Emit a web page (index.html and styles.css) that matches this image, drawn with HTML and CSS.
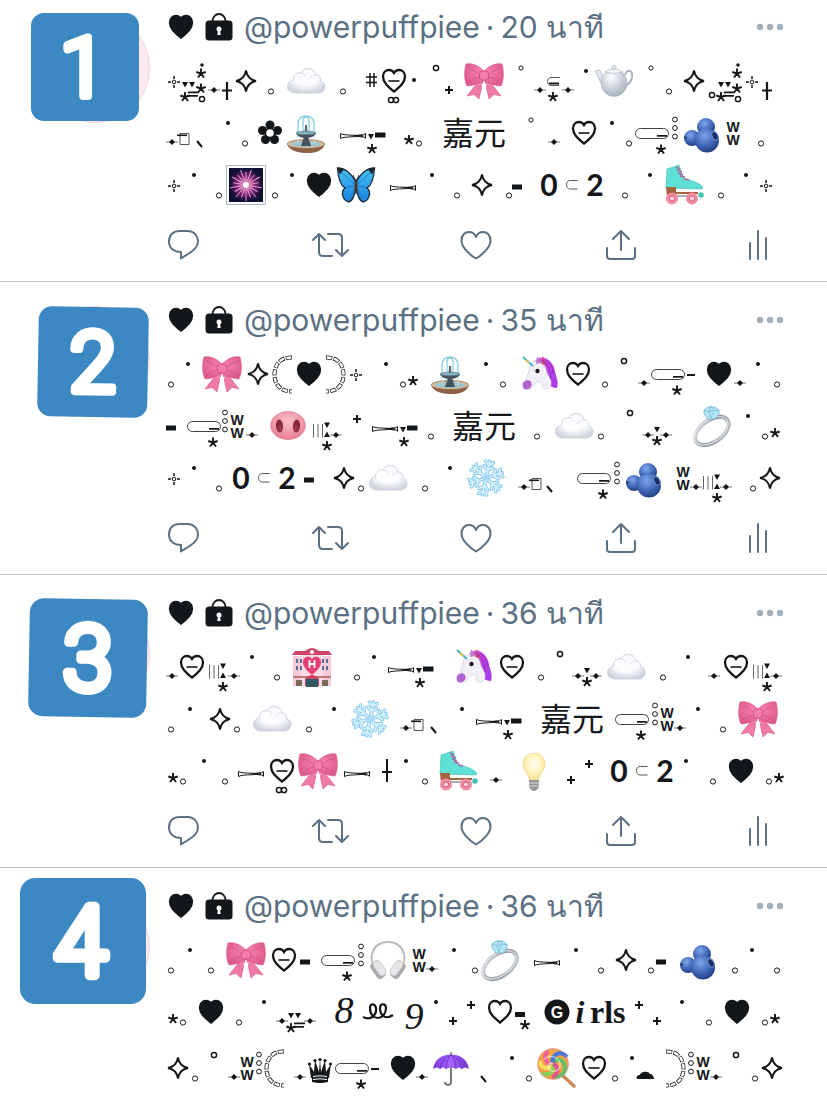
FILE: index.html
```html
<!DOCTYPE html>
<html lang="th">
<head>
  <meta charset="UTF-8">
  <meta name="viewport" content="width=device-width, initial-scale=1.0">
  <title>@powerpuffpiee</title>
  <link rel="stylesheet" href="styles.css">
</head>
<body>
  <!-- shared gradients -->
  <svg class="defs" aria-hidden="true">
    <defs>
      <radialGradient id="gCloud" cx=".5" cy=".4" r=".6"><stop offset=".5" stop-color="#fcfcfe"/><stop offset="1" stop-color="#cfd4de"/></radialGradient>
      <radialGradient id="gBow" cx=".5" cy=".4" r=".6"><stop offset="0" stop-color="#f887b0"/><stop offset="1" stop-color="#de5a8c"/></radialGradient>
      <radialGradient id="gPot" cx=".4" cy=".3" r=".7"><stop offset="0" stop-color="#fbfcfd"/><stop offset="1" stop-color="#a9b2bf"/></radialGradient>
      <radialGradient id="gBerry" cx=".4" cy=".3" r=".7"><stop offset="0" stop-color="#7fa5ea"/><stop offset=".6" stop-color="#3f68b8"/><stop offset="1" stop-color="#243f85"/></radialGradient>
      <radialGradient id="gPig" cx=".5" cy=".35" r=".65"><stop offset="0" stop-color="#fbc0cc"/><stop offset="1" stop-color="#e67f96"/></radialGradient>
      <radialGradient id="gBurst"><stop offset="0" stop-color="#fff"/><stop offset=".2" stop-color="#ff9bd6"/><stop offset=".6" stop-color="#8c2a78"/><stop offset="1" stop-color="#101035"/></radialGradient>
      <radialGradient id="gBulb" cx=".5" cy=".4" r=".6"><stop offset="0" stop-color="#fffdf2"/><stop offset=".6" stop-color="#fff2b8"/><stop offset="1" stop-color="#efd887"/></radialGradient>
      <linearGradient id="gWing" x1="0" y1="0" x2="0" y2="1"><stop offset="0" stop-color="#45c3fa"/><stop offset="1" stop-color="#1c82dc"/></linearGradient>
      <linearGradient id="gSilver" x1="0" y1="0" x2="1" y2="1"><stop offset="0" stop-color="#e4e6ea"/><stop offset=".5" stop-color="#8f959f"/><stop offset="1" stop-color="#c6cad0"/></linearGradient>
      <linearGradient id="gUmb" x1="0" y1="0" x2="1" y2="0"><stop offset="0" stop-color="#7a35d8"/><stop offset=".5" stop-color="#a765ff"/><stop offset="1" stop-color="#6f2bc8"/></linearGradient>
      <linearGradient id="gMane" x1="0" y1="0" x2="1" y2="1"><stop offset="0" stop-color="#e04be0"/><stop offset="1" stop-color="#a23bea"/></linearGradient>
    </defs>
  </svg>

  <main>
    <article class="tweet">
      <div class="avatar">
        <svg class="badge badge1" viewBox="0 0 108 108"><rect width="108" height="108" rx="13"/><text x="52" y="83">1</text></svg>
      </div>
      <div class="body">
        <header>
          <span class="name" data-glyphs="2 heart 10 bag 10"></span>
          <a class="handle" href="#">@powerpuffpiee</a><span class="time">·</span><span class="time">20 นาที</span>
          <button class="more" aria-label="More"><svg width="28" height="8" viewBox="0 0 28 8"><circle cx="4" cy="4" r="3.2"/><circle cx="14" cy="4" r="3.2"/><circle cx="24" cy="4" r="3.2"/></svg></button>
        </header>
        <p class="line" data-glyphs="2 tw 2 cl1 2 dia 2 dagL 2 star 10 lo 12 cloud 14 lo 20 hash 4 heart8 6 mid 16 hiB 4 plo 10 bow 14 hi 10 dsub 10 dot 6 teapot 14 hi 12 lo 10 star 2 cl2 4 tw 4 dagL"></p>
        <p class="line" data-glyphs="dia box 4 bs 22 dot 12 lo 10 flower 4 fountain 14 tie 2 tb 18 st 2 lo 20 cjk:嘉元 22 hi 14 dia 12 heartD 14 dot 12 lo 2 pill 2 rings 6 berry 6 ww 18 lo"></p>
        <p class="line" data-glyphs="2 tw 12 dot 20 lo 4 burst 6 lo 12 dot 12 heart 4 fly 14 tie 14 dot 20 lo 10 star 12 lo blk 18 num:0 8 sub 8 num:2 18 lo 20 dot 12 skate 14 lo 20 dot 12 tw"></p>
        <div class="actions"></div>
      </div>
    </article>

    <article class="tweet">
      <div class="avatar">
        <svg class="badge badge2" viewBox="0 0 108 108"><rect width="108" height="108" rx="13"/><text x="54" y="83">2</text></svg>
      </div>
      <div class="body">
        <header>
          <span class="name" data-glyphs="2 heart 10 bag 10"></span>
          <a class="handle" href="#">@powerpuffpiee</a><span class="time">·</span><span class="time">35 นาที</span>
          <button class="more" aria-label="More"><svg width="28" height="8" viewBox="0 0 28 8"><circle cx="4" cy="4" r="3.2"/><circle cx="14" cy="4" r="3.2"/><circle cx="24" cy="4" r="3.2"/></svg></button>
        </header>
        <p class="line" data-glyphs="2 lo 12 dot 12 bow 4 star 2 brl 4 heart 4 brr 4 tw 22 dot 12 lo 2 st 12 fountain 14 dot 12 lo 16 unicorn 8 heartD 12 lo 12 hiB 10 dia pill dash 10 heart 2 dia 10 dot 14 lo"></p>
        <p class="line" data-glyphs="blk 10 pill rings 2 ww 2 dia 12 pig 6 bt dia 10 phi 10 tie 2 tb 10 lo 18 cjk:嘉元 18 lo 14 cloud 4 lo 22 hiB 8 dia tst dia 20 ring 14 dot 12 lo 2 st"></p>
        <p class="line" data-glyphs="2 tw 12 dot 20 lo 10 num:0 8 sub 8 num:2 8 blk 18 star 2 lo 4 cloud 14 lo 20 dot 14 snow 12 dia box 2 bs 22 pill 2 rings 6 berry 14 ww dia bt dia 18 lo 2 star"></p>
        <div class="actions"></div>
      </div>
    </article>

    <article class="tweet">
      <div class="avatar">
        <svg class="badge badge3" viewBox="0 0 108 108"><rect width="108" height="108" rx="13"/><text x="54" y="83">3</text></svg>
      </div>
      <div class="body">
        <header>
          <span class="name" data-glyphs="2 heart 10 bag 10"></span>
          <a class="handle" href="#">@powerpuffpiee</a><span class="time">·</span><span class="time">36 นาที</span>
          <button class="more" aria-label="More"><svg width="28" height="8" viewBox="0 0 28 8"><circle cx="4" cy="4" r="3.2"/><circle cx="14" cy="4" r="3.2"/><circle cx="24" cy="4" r="3.2"/></svg></button>
        </header>
        <p class="line" data-glyphs="dia 2 heartD 4 bt 2 dia 10 dot 20 lo 12 hotel 22 lo 12 dot 12 tie 2 tb 22 unicorn 8 heartD 14 lo 12 hiB 8 dia tst dia 4 cloud 14 lo 20 dot 18 dia 4 heartD 4 bt dia"></p>
        <p class="line" data-glyphs="2 lo 14 dot 16 star 2 lo 12 cloud 14 lo 20 dot 14 snow 10 dia box 4 bs 22 dot 12 tie 2 tb 18 cjk:嘉元 10 pill 2 rings 2 ww dia 10 dot 20 lo 12 bow"></p>
        <p class="line" data-glyphs="2 st 2 lo 16 dot 16 lo 10 tie 6 heart8 4 bow 6 tie 12 dag 12 dot 14 lo 10 skate 12 dia 20 bulb 20 plo 8 phi 16 num:0 8 sub 8 num:2 10 dot 22 lo 12 heart 12 lo 2 st"></p>
        <div class="actions"></div>
      </div>
    </article>

    <article class="tweet">
      <div class="avatar">
        <svg class="badge badge4" viewBox="0 0 108 108"><rect width="108" height="108" rx="13"/><text x="52" y="83">4</text></svg>
      </div>
      <div class="body">
        <header>
          <span class="name" data-glyphs="2 heart 10 bag 10"></span>
          <a class="handle" href="#">@powerpuffpiee</a><span class="time">·</span><span class="time">36 นาที</span>
          <button class="more" aria-label="More"><svg width="28" height="8" viewBox="0 0 28 8"><circle cx="4" cy="4" r="3.2"/><circle cx="14" cy="4" r="3.2"/><circle cx="24" cy="4" r="3.2"/></svg></button>
        </header>
        <p class="line" data-glyphs="2 lo 14 dot 16 lo 12 bow 6 heartD 4 blk 10 pill 2 rings 6 phones 6 ww dia 14 dot 16 lo 2 ring 14 tie 14 dot 20 lo 10 star 10 lo 2 blk 14 berry 16 lo 12 dot 20 lo"></p>
        <p class="line tall" data-glyphs="2 st 2 lo 12 heart 12 lo 20 dot 10 dia cl3 dia 18 math:8 8 loops 10 mathlow:9 10 dot 10 plo 8 phi 12 heartO 2 tbd 14 G script:i serif:rls 10 phi 8 plo 18 dot 22 lo 12 heart 12 lo 2 st"></p>
        <p class="line" data-glyphs="star 2 lo 12 hiB 10 dia ww 2 rings 2 brl 10 dia 2 crown 2 pill dash 10 heart dia 4 umbrella 10 bs 22 dot 12 lo 4 lolly 6 heartD 6 lo 12 dot 2 bcloud 12 brr 2 rings 2 ww dia 10 hiB 12 lo 2 star"></p>
      </div>
    </article>
  </main>

  <script src="glyphs.js"></script>
</body>
</html>
```
FILE: styles.css
```css
* {
  box-sizing: border-box;
}

body {
  margin: 0;
  background-color: #fff;
  color: #14171a;
  font-family: Inter, "Noto Sans", "Noto Sans CJK JP", sans-serif;
}

.defs {
  position: absolute;
  width: 0;
  height: 0;
}

button {
  display: flex;
  align-items: center;
  justify-content: center;
  padding: 0;
  border: none;
  background: none;
  cursor: pointer;
}

.tweet {
  display: flex;
  gap: 16px;
  padding: 18px 40px 20px;
  border-bottom: 1px solid #bdc1c5;
}

.tweet:first-child {
  padding-top: 7px;
}

.tweet:last-child {
  padding-bottom: 0;
  border-bottom: none;
}

/* Avatar with the number on top of it */
.avatar {
  position: relative;
  flex: none;
  width: 110px;
  height: 110px;
  margin-top: 6px;
  border: 1px solid #ecd3de;
  border-radius: 50%;
  background-color: #fde9f1;
}

.badge {
  position: absolute;
  overflow: visible;
}

.badge rect {
  fill: #3b88c3;
}

.badge text {
  fill: #fff;
  stroke: #fff;
  stroke-width: 8px;
  stroke-linejoin: round;
  stroke-linecap: round;
  font-family: Roboto, sans-serif;
  font-size: 82px;
  font-weight: 300;
  text-anchor: middle;
}

.badge1 {
  top: -1px;
  left: -10px;
  width: 108px;
}

.badge2 {
  top: 0;
  left: -3px;
  width: 110px;
  transform: rotate(1deg);
}

.badge3 {
  top: -1px;
  left: -12px;
  width: 118px;
  transform: rotate(1deg);
}

.badge4 {
  top: -15px;
  left: -21px;
  width: 126px;
}

.body {
  flex: 1;
  min-width: 0;
}

header {
  display: flex;
  align-items: center;
  height: 40px;
  margin-bottom: 8px;
  color: #5b7083;
  font-size: 30px;
  white-space: pre;
}

.name {
  display: flex;
  color: #14171a;
}

.handle {
  color: inherit;
  text-decoration: none;
}

.time {
  margin-left: 6px;
}

.more {
  margin-left: auto;
  margin-right: 3px;
  color: #a3b0bc;
}

.more svg {
  fill: currentColor;
}

/* A row of symbols, text and blank space */
.line {
  display: flex;
  flex-wrap: wrap;
  align-items: center;
  min-height: 52px;
  margin: 0;
  line-height: 52px;
}

.tall {
  margin-bottom: 4px;
}

.glyph {
  flex: none;
  display: block;
  overflow: visible;
}

.glyph text {
  fill: currentColor;
  font-family: "Liberation Sans", Arial, sans-serif;
  font-size: 14px;
  font-weight: bold;
  text-anchor: middle;
}

.glyph .white {
  fill: #fff;
  font-size: 16px;
}

.cjk,
.num,
.math,
.mathlow,
.script,
.serif {
  height: 52px;
  text-align: center;
}

.cjk {
  width: 64px;
  font-family: "Noto Sans CJK JP", sans-serif;
  font-size: 32px;
  line-height: 48px;
}

.num {
  width: 18px;
  font-family: Lato, sans-serif;
  font-size: 30px;
  font-weight: bold;
  line-height: 50px;
}

.math,
.mathlow {
  width: 20px;
  font-family: "Liberation Serif", serif;
  font-size: 38px;
  font-style: italic;
  line-height: 48px;
}

.mathlow {
  line-height: 60px;
}

.script,
.serif {
  font-family: "Liberation Serif", serif;
  font-size: 32px;
  font-weight: bold;
}

.script {
  width: 20px;
  font-style: italic;
}

.serif {
  width: 34px;
}

.actions {
  display: flex;
  justify-content: space-between;
  margin-top: 18px;
  padding: 0 19px 0 2px;
}

.actions button {
  height: 32px;
  color: #5b7083;
}

.actions svg {
  overflow: visible;
  fill: none;
  stroke: currentColor;
  stroke-width: 2;
  stroke-linecap: round;
  stroke-linejoin: round;
}
```
FILE: glyphs.js
```js
// Every glyph is [width, markup] and is drawn in a box 52px high
const ast = (x, y) => `<path transform="translate(${x} ${y})" d="M0 0V-5M0 0L4.700-1.500M0 0L3 4M0 0L-3 4M0 0L-4.700-1.500" stroke="currentColor" stroke-width="1.900"/>`;
const ringAt = (x, y, r, w) => `<circle cx="${x}" cy="${y}" r="${r}" fill="none" stroke="currentColor" stroke-width="${w}"/>`;
const heartPath = 'M12 36.500C6 31.500 1 27.500 1 21.500C1 17.500 3.700 15 7 15C9.200 15 11 16.200 12 18C13 16.200 14.800 15 17 15C20.300 15 23 17.500 23 21.500C23 27.500 18 31.500 12 36.500Z';
const heartLine = `<path d="${heartPath}" fill="none" stroke="currentColor" stroke-width="2.300"/>`;
const heartDash = heartLine + '<path d="M6.500 26h11" stroke="currentColor" stroke-width="1.600"/>';
const tri = (x, y) => `<path d="M${x} ${y}h6l-3 5.500z"/>`;
const cluster = tri(0, 27) + tri(7, 27) + '<path d="M6 36.500h11v1.700h-11zM5 40h11v1.700h-11z"/>' + ast(3, 42);
const tower = '<circle cx="20" cy="10" r="1.800"/>' + ast(19, 18.5) + ast(19, 33.5) + ringAt(20, 44, 2.6, 1.5);
const chain = '<path d="M20 9.500C8 9 2.500 17 2.500 26.500S8 43.500 20 43.500" fill="none" stroke="currentColor" stroke-width="4" stroke-dasharray="6 1.500"/><path d="M20 9.500C8 9 2.500 17 2.500 26.500S8 43.500 20 43.500" fill="none" stroke="#fff" stroke-width="2.500" stroke-dasharray="4.800 2.700" stroke-dashoffset="-.6"/>';
const arm = '<path d="M20 26V9M20 13l-4-3.500M20 13l4-3.500M20 18l-4.500-3.500M20 18l4.500-3.500"/>';
let arms = '';
for (let a = 0; a < 360; a += 60) arms += `<g transform="rotate(${a + 12} 20 26)">${arm}</g>`;
let rays = '';
for (let a = 0; a < 360; a += 20) rays += `<path d="M20 ${a % 40 ? 10 : 13}V22" transform="rotate(${a} 20 26)"/>`;

const glyphs = {
  heart: [26, `<path transform="translate(1 0)" d="${heartPath}" stroke="currentColor" stroke-width="2.400"/>`],
  heartO: [24, heartLine],
  heartD: [24, heartDash],
  heart8: [24, heartDash + ringAt(9, 45, 2.6, 1.5) + ringAt(14, 45, 2.6, 1.5)],
  bag: [30, '<rect x="1.500" y="19.500" width="27" height="20" rx="3.500"/><path d="M8.500 21v-1a6.500 7 0 0 1 13 0v1" fill="none" stroke="currentColor" stroke-width="1.800"/><circle cx="15" cy="28" r="2.500" fill="#fff"/><path d="M14 29h2l.7 5h-3.400z" fill="#fff"/>'],
  tw: [12, ringAt(6, 27, 1.8, 1) + '<path d="M0 27h3M9 27h3M6 21v3M6 30v3" stroke="currentColor" stroke-width="1.500"/>'],
  lo: [6, ringAt(3, 36.5, 2.6, 1)],
  hi: [6, ringAt(3, 13, 2.1, 1)],
  hiB: [8, ringAt(4, 13, 2.6, 1.5)],
  dot: [4, '<circle cx="2" cy="16" r="2"/>'],
  mid: [4, '<circle cx="2" cy="25" r="2"/>'],
  dia: [12, '<path d="M0 35h12" stroke="#777" stroke-width="1"/><path d="M6 32l3 3-3 3-3-3z"/>'],
  dagL: [10, '<path d="M5 27v18M0 35.500h10" stroke="currentColor" stroke-width="2.200"/>'],
  dag: [10, '<path d="M5 14v23M0 27h10" stroke="currentColor" stroke-width="2"/>'],
  star: [24, '<path d="M12 15.500q1.500 9 10 10.500q-8.500 1.500-10 10.500q-1.500-9-10-10.500q8.500-1.500 10-10.500z" fill="none" stroke="currentColor" stroke-width="1.900"/>'],
  hash: [12, '<path d="M4 18v14M8 18v14M0 22h11M0 27.500h11" fill="none" stroke="currentColor" stroke-width="1.500"/>'],
  plo: [10, '<path d="M1 35h8M5 31v8" stroke="currentColor" stroke-width="2"/>'],
  phi: [10, '<path d="M1 19h8M5 15v8" stroke="currentColor" stroke-width="2"/>'],
  st: [10, ast(5, 33)],
  cl1: [24, cluster + tower],
  cl2: [34, ringAt(4, 40, 2.6, 1.5) + `<g transform="translate(10 0)">${cluster + tower}</g>`],
  cl3: [16, cluster],
  dsub: [40, '<path d="M0 35h12M28 35h12" stroke="#777"/><path d="M6 32l3 3-3 3-3-3zM34 32l3 3-3 3-3-3z"/><path d="M26 22.500h-8q-4.500 0-4.500 4t4.500 4h7" fill="none" stroke="#555"/><path d="M15 27.500h10v2h-10z"/>' + ast(19, 42)],
  box: [14, '<path d="M2 26.500h9v11h-9z" fill="none" stroke="#555"/><path d="M-1 27.500h10v1.600h-10z"/>'],
  bs: [8, '<path d="M1 34l5 6" stroke="currentColor" stroke-width="2"/>'],
  tie: [26, '<path d="M.5 26.500c5 3 20 0 25 4.500M.5 31.500c5-3 20 0 25-5M.5 26.500v5M25.500 26.500v5" fill="none" stroke="currentColor"/><path d="M12 28.500l12-1.500-4 2 4 2z"/>'],
  tb: [18, tri(0, 27) + '<path d="M7 25.500h10.500v5h-10.500z"/>' + ast(4, 42)],
  tbd: [16, '<path d="M1 26h10v5h-10z"/>' + ast(11, 39)],
  blk: [10, '<path d="M0 25.500h10v5h-10z"/>'],
  dash: [10, '<path d="M1 26h8v2h-8z"/>'],
  pill: [36, '<rect x="1.500" y="21.500" width="33" height="10" rx="5" fill="none" stroke="#444"/><path d="M23 28h10v1.700h-10z"/>' + ast(27, 42.5)],
  rings: [6, ringAt(3, 12.5, 2.4, 1) + ringAt(3, 21, 2.4, 1) + ringAt(3, 29.5, 2.4, 1)],
  ww: [14, '<text x="7" y="25">W<tspan x="7" y="37.500">W</tspan></text>'],
  bt: [18, '<path d="M1.500 24v13.500M6 24v13.500M10.500 24v13.500" stroke="#666"/><path d="M12 22.500h6l-3 5.500zM12 37h6l-3-5.500z"/>' + ast(15, 46)],
  tst: [6, tri(0, 27) + ast(3, 41)],
  sub: [12, '<path d="M11.500 21.500h-7q-4 0-4 4.200t4 4.300h7" fill="none" stroke="#555"/>'],
  brl: [20, chain],
  brr: [20, `<g transform="translate(20 0) scale(-1 1)">${chain}</g>`],
  flower: [24, '<circle cx="12" cy="18" r="4.500"/><circle cx="19.500" cy="23.500" r="4.500"/><circle cx="16.500" cy="32.500" r="4.500"/><circle cx="7.500" cy="32.500" r="4.500"/><circle cx="4.500" cy="23.500" r="4.500"/><circle cx="12" cy="26" r="5.500"/><circle cx="12" cy="26" r="3.800" fill="#fff"/>'],
  loops: [32, '<path d="M1 31c8 4 14-2 13-9c-1-5-6-5-6 0c0 7 4 10 8 10s8-4 8-10c0-5-6-5-6 0c0 8 6 12 13 7" fill="none" stroke="currentColor" stroke-width="2.200"/>'],
  G: [26, '<circle cx="13" cy="26" r="12.500"/><text class="white" x="13" y="32">G</text>'],
  crown: [24, '<path d="M3 36L1 22l5 8l1-12l4 12l1-13l1 13l4-12l1 12l5-8l-2 14z"/><circle cx="1.500" cy="22" r="1.600"/><circle cx="7" cy="18.500" r="1.600"/><circle cx="12" cy="17.500" r="1.600"/><circle cx="17" cy="18.500" r="1.600"/><circle cx="22.500" cy="22" r="1.600"/><path d="M4 33h16v7q-8 2-16 0z"/><path d="M5 34.500q7-1.500 14 0M5 37.500q7-1.500 14 0" fill="none" stroke="#fff"/>'],
  bcloud: [18, '<path d="M1 37c-1-3 1-4 3-4c0-3 8-5 10-1c2 0 4 2 4 5z"/>'],

  cloud: [40, '<path d="M9 38C4 38 1.500 35 1.500 31.500c0-3.500 2.500-6 6-6.500C7 20 11 17 15 18c2-6 13-7 15 2c4 0 5 3 4.500 5.500c3 1 4.500 3.500 4.500 6c0 4-3 6.500-7 6.500z" fill="url(#gCloud)" stroke="#c6ccd8" stroke-width=".8"/><path d="M15 18c3 0 5 2 5 4M24 24c1-3 4-5 7-4" fill="none" stroke="#dde1e9"/>'],
  bow: [40, '<path d="M17 23L3 41l7-1.500 5 4.500l5-22zM23 23l14 18-7-1.500-5 4.500-5-22z" fill="#ee7aa5" stroke="#d85585" stroke-width=".6"/><path d="M20 43l-2.500-14h5z" fill="#fff"/><path d="M20 16C13 9 6 8 2 9C0 16 0 25 3 31C9 31 15 28 20 25C25 28 31 31 37 31C40 25 40 16 38 9C34 8 27 9 20 16Z" fill="url(#gBow)" stroke="#d85585" stroke-width=".6"/><path d="M4 13q7 2 11 6M4 28q5-5 11-6M36 13q-7 2-11 6M36 28q-5-5-11-6" fill="none" stroke="#cf5482" stroke-width=".8"/><rect x="15.500" y="16" width="9" height="9" rx="3" fill="#f27da8" stroke="#cc4d7d" stroke-width=".8"/>'],
  teapot: [40, '<path d="M31 20c2-7 8-5 7 2c-1 6-4 8-8 9" fill="none" stroke="#aab3bf" stroke-width="2"/><path d="M9 30C5 28 4 19 1 16l4-1c3 2 3 6 6 8z" fill="#dfe4ea" stroke="#9ea8b5" stroke-width=".6"/><ellipse cx="20" cy="28" rx="13" ry="13.500" fill="url(#gPot)" stroke="#9aa4b1" stroke-width=".5"/><path d="M11 17q9-7 18 0q-9 3-18 0z" fill="#f4f6f8" stroke="#a8b1bc" stroke-width=".6"/><circle cx="20" cy="12.500" r="2" fill="#e6e9ee" stroke="#98a2af" stroke-width=".6"/>'],
  fountain: [40, '<path d="M12 27V16q1-7 8-7t8 7v11M17 27V14q0-4 3-4t3 4v13" fill="none" stroke="#89cfe0" stroke-width="1.300"/><path d="M19 18h2l1 22h-4z" fill="#56646d"/><path d="M10 26h20q-1 4-8 5l-2 6-2-6q-7-1-8-5z" fill="#46535c"/><ellipse cx="20" cy="26" rx="10" ry="1.800" fill="#7fb6c6" stroke="#54636c" stroke-width=".6"/><path d="M1 37q3 8.500 19 9t19-9z" fill="#8f6046"/><ellipse cx="20" cy="37" rx="19" ry="4.500" fill="#d9b893" stroke="#80604a" stroke-width=".6"/><ellipse cx="20" cy="37" rx="15.500" ry="3" fill="#9ec5cf"/><path d="M18 30h4l3 9h-10z" fill="#46535c"/><path d="M12 29v8M28 29v8" stroke="#b6e1ec"/>'],
  berry: [36, '<circle cx="8" cy="31" r="8" fill="url(#gBerry)"/><circle cx="22" cy="20" r="9" fill="url(#gBerry)"/><circle cx="23" cy="33.500" r="12" fill="url(#gBerry)"/><ellipse cx="31" cy="29" rx="2.800" ry="4.500" fill="#1c2f66" stroke="#6f92d6" transform="rotate(-25 31 29)"/><path d="M0 29l3 1.500-2 2z" fill="#1c2f66"/>'],
  burst: [40, `<path d="M.5 6.500h39v39h-39z" fill="#fff" stroke="#a9b6ce"/><path d="M3 9h34v34h-34z" fill="#101035"/><circle cx="20" cy="26" r="16" fill="url(#gBurst)" opacity=".8"/><g stroke="#f79ad6" stroke-width=".9">${rays}</g><circle cx="20" cy="26" r="3" fill="#fff"/>`],
  fly: [40, '<path d="M20 25C17 15 9 9 1.500 9C2 17 4 26 9 29C4 33 7 42 13 43C17 42 19 34 20 29C21 34 23 42 27 43C33 42 36 33 31 29C36 26 38 17 38.500 9C31 9 23 15 20 25Z" fill="url(#gWing)" stroke="#1b2636" stroke-width="1.300"/><path d="M19 26L6 14M19 27l-9 1M19 29l-6 11M21 26l13-12M21 27l9 1M21 29l6 11" stroke="#1765ad" stroke-width=".6"/><path d="M1 8.500l7 2-4 5zM39 8.500l-7 2 4 5z" fill="#1b2636"/><ellipse cx="20" cy="28" rx="1.500" ry="7" fill="#4a3524"/><path d="M20 22l-3-6M20 22l3-6" stroke="#333"/>'],
  skate: [40, '<path d="M3 10l12-4l4 12c5 4 10 3 16 7c4 2 4 4 3 5L2 29z" fill="#5fe0d5" stroke="#38b8ae" stroke-width=".6"/><path d="M2 28h10v5h22v2H12v3H3z" fill="#a4643f"/><path d="M12 8l4 2M13 11l5 2M14 14l5 2M16 17l5 1M20 20l5 1" stroke="#a869a5" stroke-width="1.600"/><path d="M8 37h24" stroke="#a9adb4" stroke-width="2"/><circle cx="37" cy="36" r="2.800" fill="#41c3b8"/><circle cx="8" cy="39.500" r="6" fill="#f38ba3"/><circle cx="28" cy="39.500" r="6" fill="#f38ba3"/><circle cx="8" cy="39.500" r="2.600" fill="#fbd5de" stroke="#c35b75"/><circle cx="28" cy="39.500" r="2.600" fill="#fbd5de" stroke="#c35b75"/>'],
  unicorn: [36, '<path d="M13 13C20 5 31 12 33 23C34 29 37 33 35 40C28 40 22 34 21 24z" fill="url(#gMane)"/><path d="M9 15C15 11 22 14 24 21C25 28 30 30 29 37C27 43 20 42 20 37C20 33 17 33 14 35L9 41H3L1 35C6 30 6 24 9 15Z" fill="#f2f0f6" stroke="#ccc6d6" stroke-width=".6"/><path d="M1 35c2-3 6-4 8-1c2 4-1 7-5 7.500c-3 0-4-3-3-6.500z" fill="#b263d3"/><path d="M11 18L1 9" stroke="#45b6c7" stroke-width="2"/><path d="M7 15l-3-3" stroke="#f1c14b" stroke-width="2"/><path d="M14 16l1-8 4 7z" fill="#b982ca"/><path d="M19 16l2-8 3 9z" fill="#cc4970"/><path d="M24 12q7 5 7 14M21 12q8 7 8 19" fill="none" stroke="#8d2bb8"/><circle cx="15.500" cy="23" r="2.200" fill="#211828"/>'],
  pig: [36, '<ellipse cx="18" cy="25.500" rx="17.500" ry="14" fill="url(#gPig)" stroke="#dc7990" stroke-width=".6"/><ellipse cx="9.500" cy="26" rx="3.500" ry="6.500" fill="#83273b" transform="rotate(-4 9.500 26)"/><ellipse cx="26.500" cy="26" rx="3.500" ry="6.500" fill="#83273b" transform="rotate(4 26.500 26)"/><ellipse cx="10" cy="28" rx="1.500" ry="3.500" fill="#a03a52"/><ellipse cx="26" cy="28" rx="1.500" ry="3.500" fill="#a03a52"/>'],
  ring: [40, '<ellipse cx="20" cy="31" rx="19" ry="11" transform="rotate(-35 20 31)" fill="none" stroke="url(#gSilver)" stroke-width="4"/><ellipse cx="19.500" cy="30.500" rx="19" ry="11" transform="rotate(-35 20 31)" fill="none" stroke="#f5f6f8" stroke-width=".8"/><path d="M12 10l4-3h7l4 3v4l-4 5h-7l-4-5z" fill="#b3e5f6" stroke="#6fb8d1" stroke-width=".8"/><path d="M12 10l5 2 5-2 5 1M17 12l2 6 3-8-3-4z" fill="none" stroke="#6ebbd4" stroke-width=".7"/>'],
  snow: [40, `<g fill="none" stroke="#83c8ec" stroke-width="3.600" stroke-linecap="round">${arms}</g><g fill="none" stroke="#d5f2fe" stroke-width="1.800" stroke-linecap="round">${arms}</g><circle cx="20" cy="26" r="3.500" fill="#a5dbf5"/>`],
  hotel: [40, '<path d="M1 15h38v30h-38z" fill="#f4cadb"/><path d="M9 10h22v35h-22z" fill="#fadae6"/><path d="M0 14l3-4h10q7-6 14 0h10l3 4z" fill="#cc4668"/><circle cx="20" cy="11" r="2" fill="#fff"/><path d="M20 34c-7-6-9-9-9-13c0-5 6-7 9-3c3-4 9-2 9 3c0 4-2 7-9 13z" fill="#e93f72"/><path d="M4 18h2v4h-2zM8 18h2v4h-2zM4 25h2v4h-2zM8 25h2v4h-2zM30 18h2v4h-2zM34 18h2v4h-2zM30 25h2v4h-2zM34 25h2v4h-2z" fill="#577093"/><path d="M1 35h38v2h-38z" fill="#ba7c70"/><path d="M13 38q7-8 14 0v7h-14z" fill="#cf3f63"/><path d="M14 38h12v8h-12z" fill="#345768"/><path d="M4 39h6v6h-6zM30 39h6v6h-6z" fill="#796a52"/><path d="M17.500 19v8M22.500 19v8M17.500 23h5" stroke="#fff" stroke-width="1.800"/>'],
  bulb: [24, '<path d="M12 8C5 8 1 13 1 19C1 26 7 29 7.500 36h9C17 29 23 26 23 19C23 13 19 8 12 8Z" fill="url(#gBulb)" stroke="#ead690" stroke-width=".6"/><path d="M7 35h10v7q-5 8-10 0z" fill="#969696"/><path d="M7 38h10M7 41h10" stroke="#d8d8d8"/>'],
  phones: [36, '<path d="M4 33C-2 20 5 8 18 8S38 20 32 33" fill="none" stroke="#b3b3b8" stroke-width="2.200"/><path d="M4 33C-1 20 6 9 18 9S37 20 32 33" fill="none" stroke="#ececee" stroke-width=".8"/><rect x="3" y="27" width="10" height="18" rx="4" transform="rotate(-35 8 36)" fill="#a9a9af"/><rect x="6" y="26" width="8" height="17" rx="4" transform="rotate(-35 9 35)" fill="#e6e6e9" stroke="#bcbcc1" stroke-width=".6"/><rect x="23" y="27" width="10" height="18" rx="4" transform="rotate(35 28 36)" fill="#a9a9af"/><rect x="22" y="26" width="8" height="17" rx="4" transform="rotate(35 27 35)" fill="#e6e6e9" stroke="#bcbcc1" stroke-width=".6"/>'],
  umbrella: [38, '<path d="M19 24v16q0 3-3 3t-3-3" fill="none" stroke="#555a61" stroke-width="1.600"/><path d="M1 27C3 16 11 12.500 19 12.500S35 16 37 27q-4-3-7 0q-3-3-6 0q-5-3-10 0q-3-3-6 0q-3-3-7 0z" fill="url(#gUmb)"/><path d="M8 27q2-11 11-14q9 3 11 14M14 27q0-9 5-14q5 5 5 14" fill="none" stroke="#6a27c1" stroke-width=".7"/><path d="M19 10v3" stroke="#444"/>'],
  lolly: [40, '<path d="M26 33l12 11" stroke="#c98a56" stroke-width="3.500" stroke-linecap="round"/><circle cx="17" cy="22" r="15.500" fill="#f2a245"/><g fill="none" stroke-width="4"><path d="M17 22c3-8 12-4 12 4c0 6-5 9-10 9" stroke="#5fc067"/><path d="M17 22c-3-9 8-15 14-7" stroke="#4577dc"/><path d="M17 22c-8 1-10-8-5-13" stroke="#ee5f93"/><path d="M17 22c-4 7-13 4-13-3" stroke="#f6df59"/><path d="M17 22c2 9-6 12-11 9" stroke="#86d156"/><path d="M17 22c7 3 5 11-1 13" stroke="#e0538a"/></g><path d="M17 22c-3-3-7 1-4 5c4 5 12 1 11-5c-1-8-12-10-16-4" fill="none" stroke="#fff" stroke-width="1.200" opacity=".6"/><circle cx="17" cy="22" r="15.500" fill="none" stroke="#d88b9e" stroke-width=".6"/>']
};

const actions = [
  ['Reply', 32, '<path d="M12 2h8c6 0 10 5 10 10.500S26 21 20 25c-3 2-5 3-7 4.500v-6.500C6 23 1 19 1 12.500S5 2 12 2z"/>'],
  ['Retweet', 36, '<path d="M1 11l6-6l6 6M7 5v18q0 4 4 4h9M16 5h10q4 0 4 4v18M24 21l6 6l6-6"/>'],
  ['Like', 32, '<path d="M16 29.500C9 25.500 1.500 18 1.500 11.500C1.500 6 5 3 9 3C12.500 3 15 5.500 16 8C17 5.500 19.500 3 23 3C27 3 30.500 6 30.500 11.500C30.500 18 23 25.500 16 29.500Z"/>'],
  ['Share', 32, '<path d="M17 21V2M9 10l8-8l8 8M3 19v8q0 3 3 3h22q3 0 3-3v-8"/>'],
  ['Stats', 20, '<path d="M2 14v16M10 2v28M18 9v21"/>']
];

document.querySelectorAll('[data-glyphs]').forEach((line) => {
  line.innerHTML = line.dataset.glyphs.split(' ').map((token) => {
    if (token.includes(':')) {
      const [style, text] = token.split(':');
      return `<span class="${style}">${text}</span>`;
    }
    if (glyphs[token]) {
      const [width, art] = glyphs[token];
      return `<svg class="glyph" width="${width}" height="52" viewBox="0 0 ${width} 52" fill="currentColor">${art}</svg>`;
    }
    // a plain number is blank space
    return `<span style="width: ${token}px"></span>`;
  }).join('');
});

document.querySelectorAll('.actions').forEach((bar) => {
  bar.innerHTML = actions.map(([label, width, art]) =>
    `<button aria-label="${label}"><svg width="${width}" height="32" viewBox="0 0 ${width} 32">${art}</svg></button>`
  ).join('');
});
```
